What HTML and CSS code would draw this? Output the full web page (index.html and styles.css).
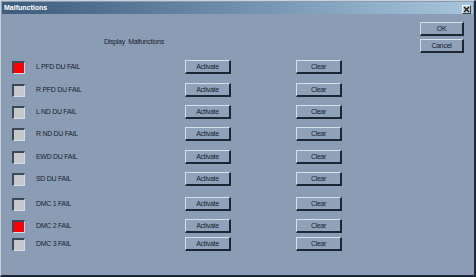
FILE: index.html
```html
<!DOCTYPE html>
<html>
<head>
<meta charset="utf-8">
<link rel="stylesheet" href="styles.css">
</head>
<body>
<div class="window">
  <div class="titlebar">
    <span class="title">Malfunctions</span>
    <span class="close"><svg width="7" height="7" viewBox="0 0 7 7"><path d="M1 1L6 6M6 1L1 6" stroke="#1a1a1a" stroke-width="1.4"/></svg></span>
  </div>
  <div class="content">
    <div class="main">
      <div class="heading">Display&nbsp; Malfunctions</div>
      <div class="rows">
        <div class="row r1"><span class="ind on"></span><span class="label">L PFD DU FAIL</span><button class="btn act">Activate</button><button class="btn clr">Clear</button></div>
        <div class="row r2"><span class="ind"></span><span class="label">R PFD DU FAIL</span><button class="btn act">Activate</button><button class="btn clr">Clear</button></div>
        <div class="row r3"><span class="ind"></span><span class="label">L ND DU FAIL</span><button class="btn act">Activate</button><button class="btn clr">Clear</button></div>
        <div class="row r4"><span class="ind"></span><span class="label">R ND DU FAIL</span><button class="btn act">Activate</button><button class="btn clr">Clear</button></div>
        <div class="row r5"><span class="ind"></span><span class="label">EWD DU FAIL</span><button class="btn act">Activate</button><button class="btn clr">Clear</button></div>
        <div class="row r6"><span class="ind"></span><span class="label">SD DU FAIL</span><button class="btn act">Activate</button><button class="btn clr">Clear</button></div>
        <div class="row r7"><span class="ind"></span><span class="label">DMC 1 FAIL</span><button class="btn act">Activate</button><button class="btn clr">Clear</button></div>
        <div class="row r8"><span class="ind on"></span><span class="label">DMC 2 FAIL</span><button class="btn act">Activate</button><button class="btn clr">Clear</button></div>
        <div class="row r9"><span class="ind"></span><span class="label">DMC 3 FAIL</span><button class="btn act">Activate</button><button class="btn clr">Clear</button></div>
      </div>
    </div>
    <div class="side">
      <button class="btn dlg">OK</button>
      <button class="btn dlg">Cancel</button>
    </div>
  </div>
</div>
</body>
</html>
```

FILE: styles.css
```css
html, body {
  margin: 0;
  padding: 0;
  background: #8a9db5;
}
.window {
  width: 476px;
  height: 277px;
  box-sizing: border-box;
  background: #8a9db5;
  border-top: 1px solid #c8d0da;
  border-left: 1px solid #c8d0da;
  border-right: 2px solid #1c2733;
  border-bottom: 2px solid #1c2733;
  padding: 1px 0 0 0;
  font-family: "Liberation Sans", Arial, sans-serif;
  color: #1a2230;
  display: flex;
  flex-direction: column;
}
.titlebar {
  height: 12px;
  margin: 0 1px;
  background: linear-gradient(to right, #3d5b7b 0%, #6f8fad 50%, #a8c6dc 100%);
  display: flex;
  align-items: center;
  justify-content: space-between;
  padding: 0 2px;
}
.title {
  color: #ffffff;
  font-weight: bold;
  font-size: 7px;
  line-height: 12px;
}
.close {
  width: 9px;
  height: 9px;
  box-sizing: border-box;
  background: #c4ccd4;
  border-top: 1px solid #f0f4f8;
  border-left: 1px solid #f0f4f8;
  border-right: 1px solid #303840;
  border-bottom: 1px solid #303840;
  display: flex;
  align-items: center;
  justify-content: center;
  margin-top: 3px;
}
.close svg { display: block; }
.content {
  flex: 1;
  display: flex;
}
.main {
  flex: 1;
  padding-left: 11px;
}
.heading {
  font-size: 7px;
  letter-spacing: -0.3px;
  line-height: 8px;
  margin-top: 24px;
  padding-left: 92px;
}
.rows {
  display: flex;
  flex-direction: column;
}
.row {
  display: flex;
  align-items: center;
  height: 14px;
}
.r1 { margin-top: 14px; }
.r2 { margin-top: 9px; }
.r3 { margin-top: 8px; }
.r4 { margin-top: 8px; }
.r5 { margin-top: 9px; }
.r6 { margin-top: 8px; }
.r7 { margin-top: 11px; }
.r8 { margin-top: 8px; }
.r9 { margin-top: 4px; }
.ind {
  width: 13px;
  height: 13px;
  flex: none;
  box-sizing: border-box;
  background: #c6c8cc;
  border-top: 2px solid #3a4858;
  border-left: 2px solid #3a4858;
  border-right: 1px solid #d4dce6;
  border-bottom: 1px solid #d4dce6;
}
.ind.on { background: #ff0000; }
.label {
  width: 160px;
  flex: none;
  box-sizing: border-box;
  padding-left: 11px;
  font-size: 7px;
  letter-spacing: -0.3px;
  line-height: 8px;
}
.btn {
  width: 46px;
  height: 14px;
  flex: none;
  box-sizing: border-box;
  margin: 0;
  padding: 0;
  background: #8fa2b9;
  border-top: 1px solid #d6e0ea;
  border-left: 1px solid #d6e0ea;
  border-right: 2px solid #1c2733;
  border-bottom: 2px solid #1c2733;
  font-family: "Liberation Sans", Arial, sans-serif;
  font-size: 7px;
  letter-spacing: -0.3px;
  color: #1a2230;
  line-height: 10px;
}
.clr { margin-left: 65px; }
.side {
  width: 44px;
  margin-right: 10px;
  padding-top: 8px;
  display: flex;
  flex-direction: column;
  gap: 3px;
}
.dlg {
  width: 44px;
}
```
